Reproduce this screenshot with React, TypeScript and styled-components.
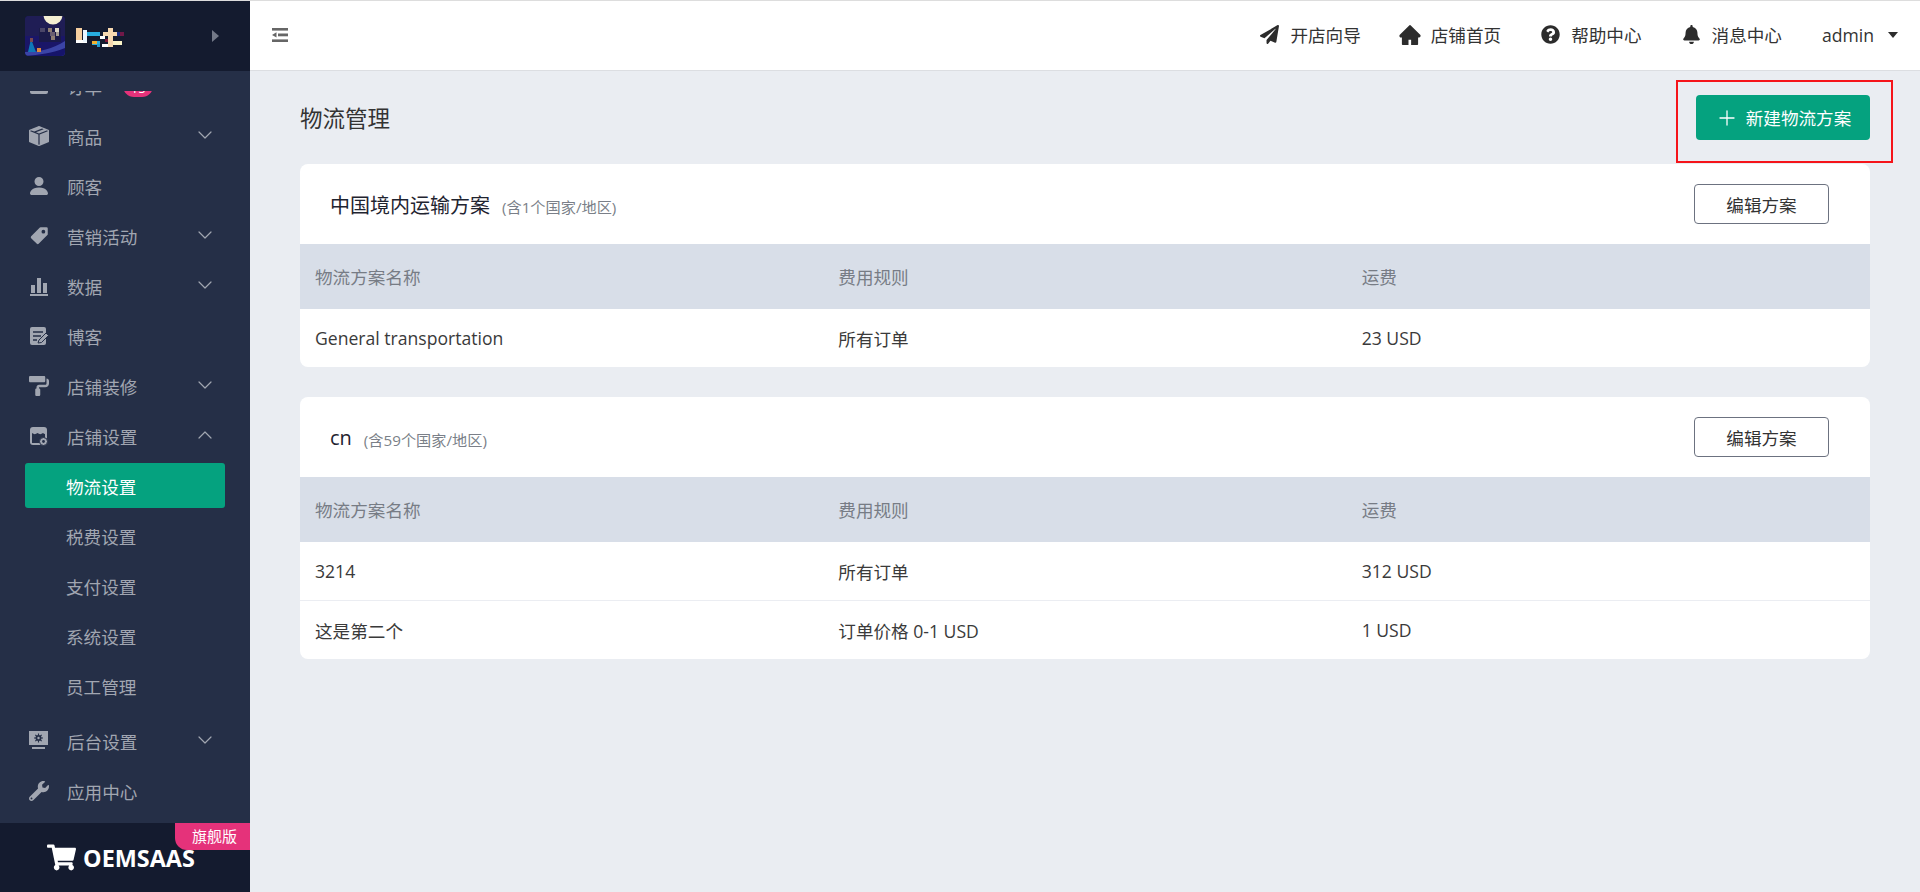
import React from 'react'
import styled, { createGlobalStyle, css } from 'styled-components'
import { ChevronDown, ChevronUp, Plus } from 'lucide-react'
import { AiFillHome } from 'react-icons/ai'
import { BsBoxSeamFill, BsPersonFill, BsTagFill } from 'react-icons/bs'
import {
  FaBell,
  FaPaintRoller,
  FaPaperPlane,
  FaQuestionCircle,
  FaShoppingCart,
  FaWrench,
} from 'react-icons/fa'

const FONT = `"Open Sans", "Noto Sans CJK SC", "Noto Sans", sans-serif`

const GlobalStyle = createGlobalStyle`
  html, body {
    margin: 0;
    padding: 0;
    height: 100%;
  }
  body {
    background: #eaedf2;
    font-family: ${FONT};
    overflow: hidden;
  }
  * {
    box-sizing: border-box;
  }
`

const Page = styled.div`
  display: flex;
  height: 892px;
  border-top: 1px solid #dddddd;
`
const Sidebar = styled.aside`
  display: flex;
  flex-direction: column;
  flex: 0 0 250px;
  background: #252f47;
`
const Brand = styled.div`
  display: flex;
  align-items: center;
  flex: 0 0 70px;
  padding: 0 25px;
  background: #141b2f;
`
const BrandCaret = styled.span`
  width: 0;
  height: 0;
  margin-left: auto;
  margin-right: 6px;
  border-top: 6px solid transparent;
  border-bottom: 6px solid transparent;
  border-left: 7px solid #737988;
`
const NavViewport = styled.nav`
  flex: 1;
  min-height: 0;
  margin-top: 20px;
  overflow: hidden;
`
const NavList = styled.div`
  margin-top: -30px;
`
const NavRow = styled.div`
  display: flex;
  align-items: center;
  height: 50px;
  padding: 0 33px 0 29px;
  color: #a1a6b1;
  font-size: 17.6px;
`
const NavIcon = styled.span`
  display: flex;
  align-items: center;
  justify-content: center;
  flex: 0 0 20px;
  min-width: 0;
  margin-right: 18px;
  font-size: 20px;
  color: #a1a6b1;
  svg {
    flex: none;
  }
`
const NavArrow = styled.span`
  display: flex;
  margin-left: auto;
  margin-top: -3px;
  color: #a1a6b1;
`
const Badge = styled.span`
  display: inline-block;
  width: 30px;
  height: 22px;
  margin-left: 21px;
  border-radius: 11px;
  background: #e5327a;
  color: #fff;
  font-size: 13px;
  line-height: 26px;
  text-align: center;
  overflow: hidden;
`
const SubList = styled.div`
  margin-bottom: 5px;
`
const SubRow = styled.div<{ $active?: boolean }>`
  display: flex;
  align-items: center;
  height: ${p => (p.$active ? '45px' : '50px')};
  margin: ${p => (p.$active ? '2px 25px 3px' : '0 25px')};
  padding: ${p => (p.$active ? '2px 0 0 41px' : '0 0 0 41px')};
  border-radius: 3px;
  background: ${p => (p.$active ? '#05a27f' : 'transparent')};
  color: ${p => (p.$active ? '#ffffff' : '#a1a6b1')};
  font-size: 17.6px;
`
const Footer = styled.div`
  position: relative;
  display: flex;
  align-items: center;
  justify-content: center;
  flex: 0 0 69px;
  padding-right: 8px;
  background: #141b2f;
  color: #fff;
`
const FooterName = styled.span`
  margin-left: 7px;
  font-size: 23.4px;
  font-weight: 700;
`
const FlagshipTag = styled.span`
  position: absolute;
  top: 0;
  right: 0;
  width: 75px;
  height: 27px;
  padding-left: 17px;
  border-bottom-left-radius: 12px;
  background: #e5327a;
  color: #fff;
  font-size: 15px;
  line-height: 26px;
`
const Main = styled.div`
  position: relative;
  display: flex;
  flex-direction: column;
  flex: 1;
  min-width: 0;
`
const TopBar = styled.header`
  display: flex;
  align-items: center;
  flex: 0 0 70px;
  padding: 0 22px 2px 22px;
  background: #fff;
  border-bottom: 1px solid #dcdee2;
  color: #333;
`
const TopLinks = styled.div`
  display: flex;
  align-items: center;
  margin-left: auto;
`
const TopLink = styled.span`
  display: flex;
  align-items: center;
  gap: 11px;
  margin-left: 40px;
  font-size: 17.6px;
  color: #333;
  white-space: nowrap;
`
const TopIcon = styled.span`
  display: flex;
  justify-content: center;
  width: 19px;
  font-size: 19px;
  color: #2c2c2c;
  svg {
    flex: none;
  }
`
const UserMenu = styled(TopLink)`
  gap: 14px;
`
const UserCaret = styled.span`
  width: 0;
  height: 0;
  border-left: 5.5px solid transparent;
  border-right: 5.5px solid transparent;
  border-top: 6px solid #2c2c2c;
`
const Content = styled.main`
  padding: 24px 50px 0;
`
const TitleRow = styled.div`
  display: flex;
  align-items: center;
  justify-content: space-between;
  height: 45px;
  margin-bottom: 24px;
`
const PageTitle = styled.h1`
  margin: 0;
  color: #333;
  font-size: 22.5px;
  font-weight: 400;
`
const PrimaryButton = styled.button`
  display: flex;
  align-items: center;
  justify-content: center;
  gap: 7px;
  width: 174px;
  height: 45px;
  padding: 0;
  border: 0;
  border-radius: 4px;
  background: #05a27f;
  color: #fff;
  font-family: inherit;
  font-size: 17.6px;
`
const RedMark = styled.div`
  position: absolute;
  top: 79px;
  right: 27px;
  width: 217px;
  height: 83px;
  border: 2px solid #f5141a;
  pointer-events: none;
`
const Card = styled.section`
  margin-bottom: 30px;
  border-radius: 8px;
  background: #fff;
  overflow: hidden;
`
const CardHead = styled.div`
  display: flex;
  align-items: center;
  height: 80px;
  padding: 0 41px 0 30px;
`
const CardTitle = styled.span`
  color: #1f2430;
  font-size: 20px;
`
const CardNote = styled.span`
  margin-left: 12px;
  padding-top: 3px;
  color: #7a7f88;
  font-size: 15.2px;
`
const OutlineButton = styled.button`
  width: 135px;
  height: 40px;
  margin-left: auto;
  border: 1px solid #6c7280;
  border-radius: 4px;
  background: #fff;
  color: #333;
  font-family: inherit;
  font-size: 17.6px;
`
const rowGrid = css`
  display: grid;
  grid-template-columns: repeat(3, 1fr);
  align-items: center;
  font-size: 17.6px;
`
const HeadRow = styled.div`
  ${rowGrid}
  height: 65px;
  background: #d8dee8;
  color: #777c85;
`
const BodyRow = styled.div`
  ${rowGrid}
  height: 58px;
  color: #3a3a3a;
  & + & {
    height: 59px;
    border-top: 1px solid #ebedf2;
  }
`
const TableCell = styled.div`
  padding: 0 15px;
`

const ChartIcon = () => (
  <svg width="18" height="20" viewBox="0 0 18 20" fill="currentColor">
    <rect x="1" y="9" width="4" height="8" />
    <rect x="7" y="2" width="4" height="15" />
    <rect x="13" y="7" width="4" height="10" />
    <rect x="0" y="18" width="18" height="2" />
  </svg>
)

const BlogIcon = () => (
  <svg width="20" height="20" viewBox="0 0 20 20">
    <rect x="1" y="1" width="16" height="18" rx="2" fill="currentColor" />
    <path d="M4 6h10M4 10h8M4 14h4" stroke="#252f47" strokeWidth="1.6" />
    <path d="M9 17l1-3 7-7 2.5 2.5-7 7z" fill="currentColor" stroke="#252f47" strokeWidth="1" />
  </svg>
)

const StoreIcon = () => (
  <svg width="20" height="20" viewBox="0 0 20 20">
    <rect x="1" y="1" width="17" height="18" rx="3" fill="currentColor" />
    <path d="M3 7c2 1.500 3.500 1.500 5.500 0 2 1.500 3.500 1.500 5.500 0 1 .8 1.500 1 2 1v9H3z" fill="#252f47" />
    <circle cx="14.500" cy="15.500" r="4" fill="currentColor" stroke="#252f47" strokeWidth="1" />
    <circle cx="14.500" cy="15.500" r="1.400" fill="#252f47" />
  </svg>
)

const AdminIcon = () => (
  <svg width="20" height="20" viewBox="0 0 20 20">
    <rect x="0" y="0" width="19" height="14" fill="currentColor" />
    <circle cx="9.5" cy="7" r="3" fill="#252f47" />
    <circle cx="9.5" cy="7" r="1.2" fill="currentColor" />
    <path
      d="M9.5 2.5v2M9.5 9.5v2M5 7h2M12 7h2M6.3 3.8l1.4 1.4M11.3 8.8l1.4 1.4M6.3 10.2l1.4-1.4M11.3 5.2l1.4-1.4"
      stroke="#252f47"
      strokeWidth="1.1"
    />
    <rect x="3" y="16" width="13" height="2" fill="currentColor" />
  </svg>
)

const OrderIcon = () => (
  <svg width="18" height="20" viewBox="0 0 18 20" fill="currentColor">
    <rect x="0" y="2" width="18" height="16" rx="2" />
  </svg>
)

const ListIcon = () => (
  <svg width="16" height="14" viewBox="0 0 16 14" fill="#666">
    <rect x="0" y="0" width="16" height="2.6" />
    <rect x="6" y="5.500" width="10" height="2.8" />
    <path d="M0 6.900l4.500-2.700v5.400z" />
    <rect x="0" y="11.400" width="16" height="2.600" />
  </svg>
)

const BrandLogo = () => (
  <svg width="102" height="40" viewBox="0 0 102 40">
    <defs>
      <clipPath id="logoClip">
        <rect width="40" height="40" rx="4" />
      </clipPath>
    </defs>
    <g clipPath="url(#logoClip)">
      <rect width="40" height="40" fill="#1a1668" />
      <rect width="40" height="20" fill="#1f1d55" />
      <circle cx="28" cy="-1" r="9.500" fill="#f4efd2" />
      <rect x="14" y="12" width="22" height="14" fill="#1a1a48" />
      <rect x="15" y="12" width="5" height="4" fill="#4a4668" />
      <rect x="23" y="12" width="4" height="4" fill="#8d7d72" />
      <rect x="30" y="12" width="4" height="4" fill="#d9d4c4" />
      <rect x="25" y="16" width="5" height="4" fill="#6a5f70" />
      <rect x="31" y="16" width="3" height="4" fill="#a29a90" />
      <rect x="26" y="20" width="4" height="4" fill="#8d7d72" />
      <path d="M0 36c14 0 28-3 40-11v15H0z" fill="#3b44a6" />
      <path d="M0 40c14-1 28-3 40-8v8z" fill="#16146a" />
      <path d="M3 36l3-13 5 13z" fill="#0f78b8" />
      <rect x="5" y="22" width="3" height="4" fill="#7a4a50" />
      <rect x="12" y="32" width="4" height="4" fill="#e08a3c" />
    </g>
    <g>
      <rect x="51" y="12" width="6" height="15" fill="#f6cfa0" />
      <rect x="51" y="24" width="11" height="3" fill="#ffffff" />
      <rect x="58" y="14" width="4" height="12" fill="#eaf6ff" />
      <rect x="62" y="16" width="13" height="4" fill="#28aee0" />
      <rect x="67" y="25" width="8" height="4" fill="#28aee0" />
      <rect x="67" y="25" width="5" height="3" fill="#f0b030" />
      <rect x="72" y="28" width="3" height="3" fill="#2098d0" />
      <rect x="75" y="20" width="5" height="3" fill="#ffffff" />
      <rect x="78" y="16" width="17" height="4" fill="#f6d8b0" />
      <rect x="83" y="12" width="5" height="19" fill="#f6d8b0" />
      <rect x="77" y="28" width="6" height="3" fill="#ffffff" />
      <rect x="88" y="25" width="9" height="4" fill="#fbf4c8" />
      <rect x="92" y="16" width="4" height="4" fill="#182a80" />
      <rect x="95" y="16" width="4" height="4" fill="#701848" />
      <rect x="80" y="23" width="3" height="3" fill="#801838" />
    </g>
  </svg>
)

type NavEntry = {
  label: string
  icon: React.ReactNode
  arrow?: 'up' | 'down'
}

const storeSubItems = ['物流设置', '税费设置', '支付设置', '系统设置', '员工管理']

const upperNav: NavEntry[] = [
  { label: '商品', icon: <BsBoxSeamFill />, arrow: 'down' },
  { label: '顾客', icon: <BsPersonFill size={24} /> },
  { label: '营销活动', icon: <BsTagFill style={{ transform: 'scaleX(-1)' }} />, arrow: 'down' },
  { label: '数据', icon: <ChartIcon />, arrow: 'down' },
  { label: '博客', icon: <BlogIcon /> },
  { label: '店铺装修', icon: <FaPaintRoller />, arrow: 'down' },
  { label: '店铺设置', icon: <StoreIcon />, arrow: 'up' },
]

const lowerNav: NavEntry[] = [
  { label: '后台设置', icon: <AdminIcon />, arrow: 'down' },
  { label: '应用中心', icon: <FaWrench /> },
]

const NavItem: React.FC<NavEntry> = ({ label, icon, arrow }) => (
  <NavRow>
    <NavIcon>{icon}</NavIcon>
    {label}
    {arrow && (
      <NavArrow>
        {arrow === 'down' ? (
          <ChevronDown size={24} strokeWidth={1.2} />
        ) : (
          <ChevronUp size={24} strokeWidth={1.2} />
        )}
      </NavArrow>
    )}
  </NavRow>
)

const topLinks = [
  { label: '开店向导', icon: <FaPaperPlane /> },
  { label: '店铺首页', icon: <AiFillHome size={24} /> },
  { label: '帮助中心', icon: <FaQuestionCircle /> },
  { label: '消息中心', icon: <FaBell /> },
]

type Plan = {
  title: string
  note: string
  rows: string[][]
}

const plans: Plan[] = [
  {
    title: '中国境内运输方案',
    note: '(含1个国家/地区)',
    rows: [['General transportation', '所有订单', '23 USD']],
  },
  {
    title: 'cn',
    note: '(含59个国家/地区)',
    rows: [
      ['3214', '所有订单', '312 USD'],
      ['这是第二个', '订单价格 0-1 USD', '1 USD'],
    ],
  },
]

const App: React.FC = () => (
  <>
    <GlobalStyle />
    <Page>
      <Sidebar>
        <Brand>
          <BrandLogo />
          <BrandCaret />
        </Brand>
        <NavViewport>
          <NavList>
            <NavRow>
              <NavIcon>
                <OrderIcon />
              </NavIcon>
              订单
              <Badge>15</Badge>
            </NavRow>
            {upperNav.map(item => (
              <NavItem key={item.label} {...item} />
            ))}
            <SubList>
              {storeSubItems.map((label, index) => (
                <SubRow key={label} $active={index === 0}>
                  {label}
                </SubRow>
              ))}
            </SubList>
            {lowerNav.map(item => (
              <NavItem key={item.label} {...item} />
            ))}
          </NavList>
        </NavViewport>
        <Footer>
          <FaShoppingCart size={29} />
          <FooterName>OEMSAAS</FooterName>
          <FlagshipTag>旗舰版</FlagshipTag>
        </Footer>
      </Sidebar>
      <Main>
        <TopBar>
          <ListIcon />
          <TopLinks>
            {topLinks.map(link => (
              <TopLink key={link.label}>
                <TopIcon>{link.icon}</TopIcon>
                {link.label}
              </TopLink>
            ))}
            <UserMenu>
              admin
              <UserCaret />
            </UserMenu>
          </TopLinks>
        </TopBar>
        <Content>
          <TitleRow>
            <PageTitle>物流管理</PageTitle>
            <PrimaryButton>
              <Plus size={24} strokeWidth={1.3} />
              新建物流方案
            </PrimaryButton>
          </TitleRow>
          {plans.map(plan => (
            <Card key={plan.title}>
              <CardHead>
                <CardTitle>{plan.title}</CardTitle>
                <CardNote>{plan.note}</CardNote>
                <OutlineButton>编辑方案</OutlineButton>
              </CardHead>
              <HeadRow>
                <TableCell>物流方案名称</TableCell>
                <TableCell>费用规则</TableCell>
                <TableCell>运费</TableCell>
              </HeadRow>
              {plan.rows.map(row => (
                <BodyRow key={row[0]}>
                  {row.map(cell => (
                    <TableCell key={cell}>{cell}</TableCell>
                  ))}
                </BodyRow>
              ))}
            </Card>
          ))}
        </Content>
        <RedMark />
      </Main>
    </Page>
  </>
)

export default App
